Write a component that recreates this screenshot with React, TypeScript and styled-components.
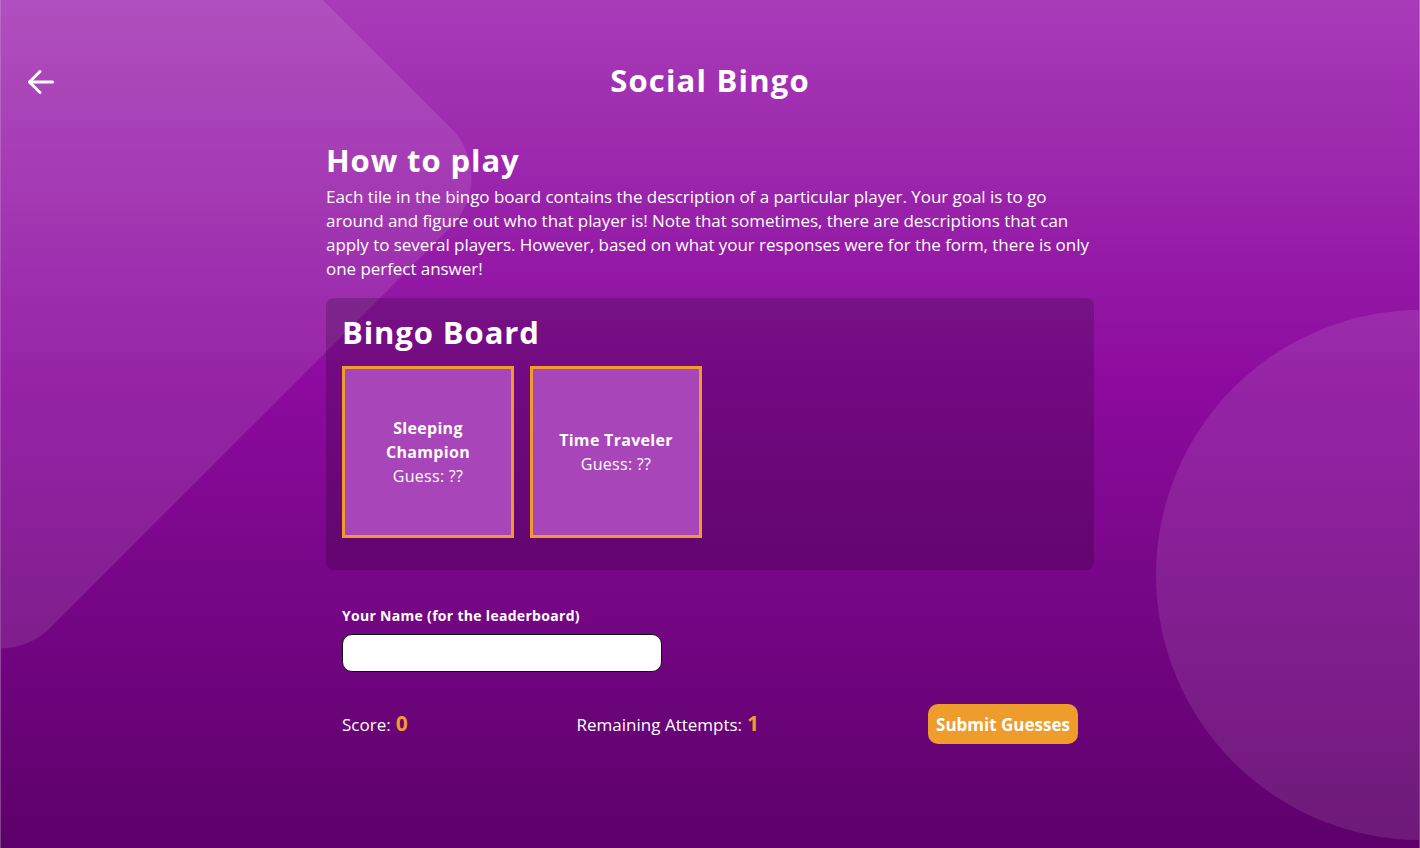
import React from "react";
import styled, { createGlobalStyle } from "styled-components";

const GlobalStyle = createGlobalStyle`
  html, body { margin: 0; padding: 0; }
  body { font-family: "Open Sans", "DejaVu Sans", sans-serif; }
  * { box-sizing: border-box; }
`;

const Page = styled.div`
  position: relative;
  width: 100%;
  height: 848px;
  overflow: hidden;
  background: linear-gradient(180deg, #a83cb8 0%, #8c0b9e 45%, #5d006a 100%);
  border-left: 1px solid rgba(255, 255, 255, 0.25);
  border-right: 1px solid rgba(255, 255, 255, 0.25);
  color: #fff;
`;

const Diamond = styled.div`
  position: absolute;
  left: -354px;
  top: -176px;
  width: 707px;
  height: 707px;
  transform: rotate(45deg);
  border-radius: 70px;
  background: rgba(255, 255, 255, 0.1);
  pointer-events: none;
`;

const Circle = styled.div`
  position: absolute;
  left: 1155px;
  top: 310px;
  width: 530px;
  height: 530px;
  border-radius: 50%;
  background: rgba(255, 255, 255, 0.1);
  pointer-events: none;
`;

const Content = styled.div`
  position: relative;
  z-index: 1;
`;

const Header = styled.header`
  display: grid;
  grid-template-columns: 1fr auto 1fr;
  align-items: center;
  padding-top: 60px;
`;

const BackButton = styled.button`
  justify-self: start;
  margin-left: 25px;
  margin-top: 4px;
  padding: 0;
  border: none;
  background: none;
  color: #fff;
  display: flex;
  cursor: pointer;
`;

const Title = styled.h1`
  margin: 0;
  font-size: 31px;
  line-height: 40px;
  letter-spacing: 1.2px;
  font-weight: 700;
`;

const Main = styled.main`
  width: 768px;
  margin: 42px auto 0;
`;

const SectionTitle = styled.h2`
  margin: 0;
  font-size: 31px;
  line-height: 36px;
  letter-spacing: 0.9px;
  font-weight: 700;
`;

const Intro = styled.p`
  margin: 7px 0 0;
  font-size: 17px;
  line-height: 24px;
  letter-spacing: -0.05px;
`;

const Board = styled.section`
  margin-top: 17px;
  padding: 16px 16px 32px;
  border-radius: 8px;
  background: rgba(0, 0, 0, 0.18);
`;

const TileGrid = styled.div`
  margin-top: 16px;
  display: grid;
  grid-template-columns: repeat(auto-fill, 172px);
  gap: 16px;
`;

const Tile = styled.div`
  height: 172px;
  border: 3px solid #ee9c2b;
  background: #a845b8;
  display: flex;
  flex-direction: column;
  align-items: center;
  justify-content: center;
  padding: 0 16px;
  text-align: center;
  font-size: 16px;
  line-height: 24px;
  letter-spacing: 0.3px;
`;

const TileName = styled.div`
  font-weight: 700;
`;

const Form = styled.section`
  margin-top: 37px;
  padding: 0 16px;
`;

const Label = styled.label`
  display: block;
  font-size: 14px;
  line-height: 18px;
  letter-spacing: 0.3px;
  font-weight: 700;
`;

const NameInput = styled.input`
  display: block;
  margin-top: 9px;
  width: 320px;
  height: 38px;
  border: 1px solid #111;
  border-radius: 10px;
  background: #fff;
  padding: 0 12px;
  font-size: 16px;
`;

const Footer = styled.div`
  margin-top: 32px;
  display: flex;
  align-items: center;
  justify-content: space-between;
`;

const Stat = styled.div`
  font-size: 17px;
  line-height: 24px;
  display: flex;
  align-items: baseline;
  gap: 5px;
`;

const StatValue = styled.span`
  color: #ee9c2b;
  font-weight: 700;
  font-size: 21px;
`;

const SubmitButton = styled.button`
  height: 40px;
  width: 150px;
  border: none;
  border-radius: 10px;
  background: #ee9c2b;
  color: #fff;
  font-family: inherit;
  font-size: 17px;
  font-weight: 700;
  padding: 0;
  cursor: pointer;
`;

const tiles = [
  { name: "Sleeping Champion", guess: "??" },
  { name: "Time Traveler", guess: "??" },
];

function BackArrow() {
  return (
    <svg width="28" height="26" viewBox="0 0 28 26" fill="none" stroke="currentColor" strokeWidth="3" strokeLinecap="round" strokeLinejoin="round">
      <path d="M26.5 13H3.5" />
      <path d="M14 2.5L3.5 13L14 23.5" />
    </svg>
  );
}

export default function App() {
  return (
    <>
      <GlobalStyle />
      <Page>
        <Diamond />
        <Circle />
        <Content>
          <Header>
            <BackButton aria-label="Back">
              <BackArrow />
            </BackButton>
            <Title>Social Bingo</Title>
            <span />
          </Header>
          <Main>
            <SectionTitle>How to play</SectionTitle>
            <Intro>
              Each tile in the bingo board contains the description of a particular player. Your goal is to go
              around and figure out who that player is! Note that sometimes, there are descriptions that can
              apply to several players. However, based on what your responses were for the form, there is only
              one perfect answer!
            </Intro>
            <Board>
              <SectionTitle>Bingo Board</SectionTitle>
              <TileGrid>
                {tiles.map((t) => (
                  <Tile key={t.name}>
                    <TileName>{t.name}</TileName>
                    <div>Guess: {t.guess}</div>
                  </Tile>
                ))}
              </TileGrid>
            </Board>
            <Form>
              <Label htmlFor="player-name">Your Name (for the leaderboard)</Label>
              <NameInput id="player-name" type="text" />
              <Footer>
                <Stat>
                  Score: <StatValue>0</StatValue>
                </Stat>
                <Stat>
                  Remaining Attempts: <StatValue>1</StatValue>
                </Stat>
                <SubmitButton>Submit Guesses</SubmitButton>
              </Footer>
            </Form>
          </Main>
        </Content>
      </Page>
    </>
  );
}
